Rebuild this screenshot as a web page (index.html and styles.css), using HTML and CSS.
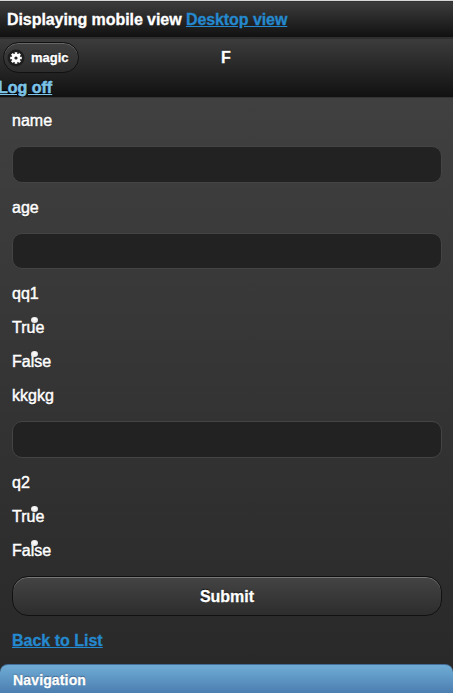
FILE: index.html
```html
<!DOCTYPE html>
<html lang="en">
<head>
<meta charset="utf-8">
<title>F</title>
<link rel="stylesheet" href="styles.css">
</head>
<body>
<div class="page">
  <div class="switcher">Displaying mobile view&nbsp;<a class="link" href="#">Desktop view</a></div>
  <header class="header">
    <div class="bar">
      <a class="magic" href="#">
        <svg class="gear" viewBox="0 0 18 18" width="18" height="18" aria-hidden="true">
          <circle cx="9" cy="9" r="8.5" fill="#1e1e1e"/>
          <g stroke="#fff" stroke-width="2.6">
            <path d="M9 3.2v11.6M3.2 9h11.6M4.9 4.9l8.2 8.2M13.1 4.9l-8.2 8.2"/>
          </g>
          <circle cx="9" cy="9" r="4.2" fill="#fff"/>
          <circle cx="9" cy="9" r="1.6" fill="#222"/>
        </svg>
        <span>magic</span>
      </a>
      <h1 class="title">F</h1>
    </div>
    <a class="logoff" href="#">Log off</a>
  </header>
  <form class="content">
    <label class="row" for="name">name</label>
    <input class="field" id="name" type="text">
    <label class="row" for="age">age</label>
    <input class="field short" id="age" type="text">
    <div class="row">qq1</div>
    <label class="row option">True<i class="dot"></i></label>
    <label class="row option">False<i class="dot"></i></label>
    <label class="row" for="kk">kkgkg</label>
    <input class="field" id="kk" type="text">
    <div class="row">q2</div>
    <label class="row option">True<i class="dot"></i></label>
    <label class="row option">False<i class="dot"></i></label>
    <button class="submit" type="button">Submit</button>
    <div class="row back"><a class="link" href="#">Back to List</a></div>
  </form>
  <nav class="navigation">Navigation</nav>
</div>
</body>
</html>
```
FILE: styles.css
```css
* { box-sizing: border-box; }
body {
  margin: 0;
  overflow: hidden;
  background: #262626;
  color: #fff;
  font: 16px/20px "Liberation Sans", Arial, sans-serif;
}
.page {
  height: 693px;
  overflow: hidden;
  border-top: 1px solid #d6d8d8;
  background: linear-gradient(#444 0, #404040 100px, #282828 100%);
}
.link { color: #2489ce; font-weight: bold; -webkit-text-stroke: .3px #2489ce; }
.switcher {
  display: flex;
  height: 37px;
  padding: 8px 7px 0;
  border-top: 1px solid #333;
  border-bottom: 1px solid #2f2f2f;
  background: linear-gradient(#3c3c3c, #111);
  font-weight: bold;
  letter-spacing: -.07px;
  -webkit-text-stroke: .3px #fff;
}
.header {
  height: 60px;
  border-top: 1px solid #2f2f2f;
  border-bottom: 1px solid #333;
  background: linear-gradient(#3c3c3c, #111);
  font-weight: bold;
  text-shadow: 0 -1px 1px #000;
}
.bar {
  display: grid;
  grid-template-columns: 1fr auto 1fr;
  height: 39px;
  padding: 3px 4px 0 3px;
}
.magic {
  display: flex;
  align-items: center;
  gap: 6px;
  width: 76px;
  height: 31px;
  padding-left: 3px;
  border: 1px solid #111;
  border-radius: 16px;
  background: linear-gradient(#404040, #2c2c2c);
  box-shadow: inset 0 1px 0 #666;
  color: #fff;
  font-size: 13px;
  text-decoration: none;
  -webkit-text-stroke: .3px #fff;
}
.gear { flex: none; }
.title { margin: 6px 0 0; font-size: 16px; line-height: 20px; -webkit-text-stroke: .3px #fff; }
.logoff { display: block; margin-left: -2px; color: #7cc4e7; -webkit-text-stroke: .3px #7cc4e7; }
.content {
  display: flex;
  flex-direction: column;
  padding: 6px 11px 0 12px;
}
.row {
  display: flex;
  align-items: center;
  flex: none;
  height: 34px;
  -webkit-text-stroke: .45px #fff;
  text-shadow: 0 1px 0 #111;
}
.option { position: relative; }
.dot {
  position: absolute;
  top: 6px;
  left: 19px;
  width: 7px;
  height: 6px;
  border-radius: 50%;
  background: radial-gradient(circle at 50% 40%, #fff, #ddd);
}
.field {
  flex: none;
  height: 37px;
  margin: 8px 0;
  padding: 0 8px;
  border: 1px solid #444;
  border-radius: 10px;
  outline: none;
  background: #222;
  color: #fff;
  font: inherit;
}
.short { height: 36px; }
.submit {
  height: 40px;
  margin: 8px 0;
  padding: 0;
  border: 1px solid #111;
  border-radius: 16px;
  background: linear-gradient(#444, #2d2d2d);
  box-shadow: inset 0 1px 0 #777;
  color: #fff;
  font: bold 16px/20px "Liberation Sans", Arial, sans-serif;
  padding-top: 1px;
  text-shadow: 0 -1px 1px #000;
  -webkit-text-stroke: .3px #fff;
}
.back { text-shadow: none; }
.navigation {
  height: 40px;
  margin-top: 6px;
  padding: 5px 13px;
  border-top: 1px solid #456f9a;
  border-radius: 8px 8px 0 0;
  background: linear-gradient(#6facd5 0, #497bae 30px);
  font-size: 14px;
  font-weight: bold;
  letter-spacing: .15px;
  text-shadow: 0 -1px 1px #254f7a;
  -webkit-text-stroke: .3px #fff;
}
```
